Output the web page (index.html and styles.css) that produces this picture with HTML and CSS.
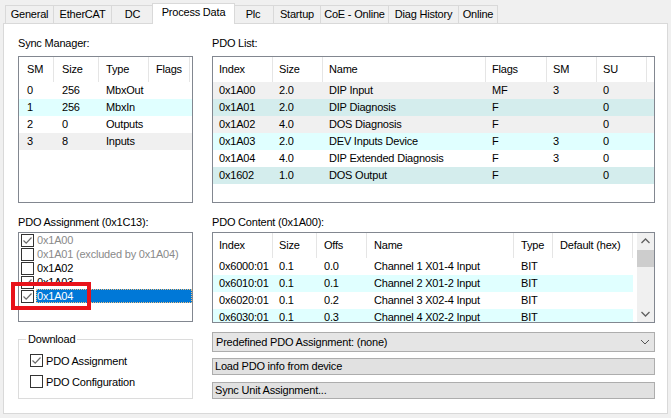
FILE: index.html
```html
<!DOCTYPE html>
<html>
<head>
<meta charset="utf-8">
<link rel="stylesheet" href="styles.css">
</head>
<body>
<div class="tabs">
  <div class="tab w-general">General</div>
  <div class="tab w-ethercat">EtherCAT</div>
  <div class="tab w-dc">DC</div>
  <div class="tab tab-sel w-pd">Process Data</div>
  <div class="tab w-plc">Plc</div>
  <div class="tab w-startup">Startup</div>
  <div class="tab w-coe">CoE - Online</div>
  <div class="tab w-diag">Diag History</div>
  <div class="tab w-online">Online</div>
</div>
<div class="panel">
  <div class="col">
    <div class="label first">Sync Manager:</div>
    <div class="lv box-top sm">
      <div class="lv-head"><span>SM</span><span>Size</span><span>Type</span><span>Flags</span></div>
      <div class="lv-row"><span>0</span><span>256</span><span>MbxOut</span><span></span></div>
      <div class="lv-row cyan"><span>1</span><span>256</span><span>MbxIn</span><span></span></div>
      <div class="lv-row"><span>2</span><span>0</span><span>Outputs</span><span></span></div>
      <div class="lv-row grey"><span>3</span><span>8</span><span>Inputs</span><span></span></div>
    </div>
    <div class="label second">PDO Assignment (0x1C13):</div>
    <div class="lb">
      <div class="lb-item dis"><span class="cb checked"><svg width="13" height="13" viewBox="0 0 13 13"><path d="M2.5 6.5 L5.2 9.2 L10.5 3.5" fill="none" stroke="#6a6a6a" stroke-width="1.2"/></svg></span><span class="lb-text">0x1A00</span></div>
      <div class="lb-item dis"><span class="cb"></span><span class="lb-text">0x1A01 (excluded by 0x1A04)</span></div>
      <div class="lb-item"><span class="cb"></span><span class="lb-text">0x1A02</span></div>
      <div class="lb-item"><span class="cb checked"><svg width="13" height="13" viewBox="0 0 13 13"><path d="M2.5 6.5 L5.2 9.2 L10.5 3.5" fill="none" stroke="#6a6a6a" stroke-width="1.2"/></svg></span><span class="lb-text">0x1A03</span></div>
      <div class="lb-item"><span class="cb checked"><svg width="13" height="13" viewBox="0 0 13 13"><path d="M2.5 6.5 L5.2 9.2 L10.5 3.5" fill="none" stroke="#6a6a6a" stroke-width="1.2"/></svg></span><span class="lb-text sel">0x1A04</span></div>
    </div>
    <div class="group">
      <span class="group-title">Download</span>
      <div class="chk"><span class="cb checked"><svg width="13" height="13" viewBox="0 0 13 13"><path d="M2.5 6.5 L5.2 9.2 L10.5 3.5" fill="none" stroke="#6a6a6a" stroke-width="1.2"/></svg></span><span>PDO Assignment</span></div>
      <div class="chk"><span class="cb"></span><span>PDO Configuration</span></div>
    </div>
  </div>
  <div class="col">
    <div class="label first">PDO List:</div>
    <div class="lv box-top pl">
      <div class="lv-head"><span>Index</span><span>Size</span><span>Name</span><span>Flags</span><span>SM</span><span>SU</span></div>
      <div class="lv-row grey"><span>0x1A00</span><span>2.0</span><span>DIP Input</span><span>MF</span><span>3</span><span>0</span></div>
      <div class="lv-row teal"><span>0x1A01</span><span>2.0</span><span>DIP Diagnosis</span><span>F</span><span></span><span>0</span></div>
      <div class="lv-row grey"><span>0x1A02</span><span>4.0</span><span>DOS Diagnosis</span><span>F</span><span></span><span>0</span></div>
      <div class="lv-row cyan"><span>0x1A03</span><span>2.0</span><span>DEV Inputs Device</span><span>F</span><span>3</span><span>0</span></div>
      <div class="lv-row"><span>0x1A04</span><span>4.0</span><span>DIP Extended Diagnosis</span><span>F</span><span>3</span><span>0</span></div>
      <div class="lv-row teal"><span>0x1602</span><span>1.0</span><span>DOS Output</span><span>F</span><span></span><span>0</span></div>
    </div>
    <div class="label second">PDO Content (0x1A00):</div>
    <div class="lv pc">
      <div class="pc-body">
        <div class="lv-head"><span>Index</span><span>Size</span><span>Offs</span><span>Name</span><span>Type</span><span>Default (hex)</span></div>
        <div class="lv-row"><span>0x6000:01</span><span>0.1</span><span>0.0</span><span>Channel 1 X01-4 Input</span><span>BIT</span><span></span></div>
        <div class="lv-row cyan"><span>0x6010:01</span><span>0.1</span><span>0.1</span><span>Channel 2 X01-2 Input</span><span>BIT</span><span></span></div>
        <div class="lv-row"><span>0x6020:01</span><span>0.1</span><span>0.2</span><span>Channel 3 X02-4 Input</span><span>BIT</span><span></span></div>
        <div class="lv-row cyan"><span>0x6030:01</span><span>0.1</span><span>0.3</span><span>Channel 4 X02-2 Input</span><span>BIT</span><span></span></div>
      </div>
      <div class="vscroll">
        <svg class="arr" width="17" height="17" viewBox="0 0 17 17"><path d="M4.5 10 L8.5 6 L12.5 10" fill="none" stroke="#606060" stroke-width="1.3"/></svg>
        <div class="thumb"></div>
        <div class="track"></div>
        <svg class="arr" width="17" height="17" viewBox="0 0 17 17"><path d="M4.5 7 L8.5 11 L12.5 7" fill="none" stroke="#606060" stroke-width="1.3"/></svg>
      </div>
    </div>
    <div class="combo"><span>Predefined PDO Assignment: (none)</span><svg width="10" height="6" viewBox="0 0 10 6"><path d="M1 1 L5 5 L9 1" fill="none" stroke="#555" stroke-width="1"/></svg></div>
    <div class="btn b1">Load PDO info from device</div>
    <div class="btn b2">Sync Unit Assignment...</div>
  </div>
  <div class="redbox"></div>
</div>
</body>
</html>
```
FILE: styles.css
```css
* { box-sizing: border-box; }
body {
  margin: 0;
  background: #f0f0f0;
  font-family: "Liberation Sans", Arial, sans-serif;
  font-size: 11px;
  letter-spacing: -0.2px;
  color: #000;
  width: 671px;
  height: 418px;
  overflow: hidden;
}
.tabs {
  display: flex;
  align-items: flex-end;
  height: 23px;
  padding-left: 5px;
  position: relative;
  z-index: 2;
}
.tab {
  height: 18px;
  line-height: 17px;
  text-align: center;
  border: 1px solid #d9d9d9;
  border-bottom: none;
  margin-left: -1px;
  background: #f0f0f0;
}
.tab:first-child { margin-left: 0; }
.tab-sel {
  height: 21px;
  margin-bottom: -1px;
  margin-left: -2px;
  margin-right: -2px;
  background: #fff;
  line-height: 17px;
  position: relative;
  z-index: 3;
}
.w-general { width: 49px; }
.w-ethercat { width: 59px; }
.w-dc { width: 43px; }
.w-pd { width: 83px; }
.w-plc { width: 42px; }
.w-startup { width: 48px; }
.w-coe { width: 69px; }
.w-diag { width: 71px; }
.w-online { width: 40px; }

.panel {
  position: relative;
  margin-left: 3px;
  width: 665px;
  height: 391px;
  border: 1px solid #d9d9d9;
  background: #fff;
  display: flex;
  gap: 19px;
  padding-left: 14px;
}
.col { display: flex; flex-direction: column; }
.col:first-child { width: 175px; }
.col:nth-child(2) { width: 443px; }
.label { height: 13px; line-height: 13px; white-space: nowrap; }
.label.first { margin-top: 13px; }
.label.second { margin-top: 13px; }
.box-top { margin-top: 6px; }

.lv {
  border: 1px solid #828790;
  background: #fff;
  overflow: hidden;
}
.sm, .pl { height: 147px; }
.lv-head { display: flex; height: 25px; }
.lv-head span {
  line-height: 25px;
  border-right: 1px solid #e5e5e5;
  padding-left: 6px;
  white-space: nowrap;
  flex: none;
}
.lv-row { display: flex; height: 17px; }
.lv-row span {
  line-height: 17px;
  padding-left: 6px;
  white-space: nowrap;
  overflow: hidden;
  flex: none;
}
.lv-row.grey { background: #f0f0f0; }
.lv-row.cyan { background: #e0ffff; }
.lv-row.teal { background: #d4eded; }

.sm .lv-head span:nth-child(1), .sm .lv-row span:nth-child(1) { width: 35px; padding-left: 8px; }
.sm .lv-head span:nth-child(2), .sm .lv-row span:nth-child(2) { width: 45px; padding-left: 8px; }
.sm .lv-head span:nth-child(3), .sm .lv-row span:nth-child(3) { width: 50px; padding-left: 7px; }
.sm .lv-head span:nth-child(4), .sm .lv-row span:nth-child(4) { width: 41px; padding-left: 7px; }

.pl .lv-head span:nth-child(1), .pl .lv-row span:nth-child(1) { width: 60px; }
.pl .lv-head span:nth-child(2), .pl .lv-row span:nth-child(2) { width: 50px; }
.pl .lv-head span:nth-child(3), .pl .lv-row span:nth-child(3) { width: 163px; }
.pl .lv-head span:nth-child(4), .pl .lv-row span:nth-child(4) { width: 61px; }
.pl .lv-head span:nth-child(5), .pl .lv-row span:nth-child(5) { width: 50px; }
.pl .lv-head span:nth-child(6), .pl .lv-row span:nth-child(6) { width: 50px; }

.pc {
  margin-top: 3px;
  height: 91px;
  display: flex;
  justify-content: space-between;
}
.pc-body { width: 420px; flex: none; }
.pc .lv-head span:nth-child(1), .pc .lv-row span:nth-child(1) { width: 60px; }
.pc .lv-head span:nth-child(2), .pc .lv-row span:nth-child(2) { width: 44px; }
.pc .lv-head span:nth-child(3), .pc .lv-row span:nth-child(3) { width: 50px; padding-left: 7px; }
.pc .lv-head span:nth-child(4), .pc .lv-row span:nth-child(4) { width: 147px; padding-left: 7px; }
.pc .lv-head span:nth-child(5), .pc .lv-row span:nth-child(5) { width: 39px; padding-left: 7px; }
.pc .lv-head span:nth-child(6), .pc .lv-row span:nth-child(6) { width: 80px; padding-left: 7px; }

.vscroll {
  width: 17px;
  flex: none;
  background: #f0f0f0;
  display: flex;
  flex-direction: column;
}
.vscroll .arr { display: block; flex: none; }
.thumb { height: 17px; background: #cdcdcd; flex: none; }
.track { flex: 1; }

.lb {
  margin-top: 3px;
  height: 90px;
  border: 1px solid #828790;
  background: #fff;
  padding-left: 2px;
}
.lb-item { display: flex; height: 14px; align-items: flex-start; }
.lb-item .cb { margin-top: 1px; }
.lb-text {
  margin-left: 2px;
  line-height: 14px;
  height: 14px;
  padding-left: 1px;
}
.lb-item.dis .lb-text { color: #8a8a8a; }
.lb-text.sel {
  flex: 1;
  background: #0078d7;
  color: #fff;
  outline: 1px dotted #f0c080;
  outline-offset: -1px;
  margin-right: 0;
}
.cb {
  width: 13px;
  height: 13px;
  border: 1px solid #333;
  background: #fff;
  flex: none;
  position: relative;
  display: block;
}
.cb svg { position: absolute; left: -1px; top: -1px; }

.group {
  position: relative;
  margin-top: 17px;
  height: 60px;
  border: 1px solid #dcdcdc;
  padding: 14px 0 0 11px;
  display: flex;
  flex-direction: column;
  gap: 8px;
}
.group-title {
  position: absolute;
  top: -7px;
  left: 7px;
  background: #fff;
  padding: 0 2px;
  line-height: 13px;
}
.chk { display: flex; align-items: center; height: 13px; gap: 3px; }

.combo {
  margin-top: 9px;
  height: 20px;
  border: 1px solid #adadad;
  background: #e5e5e5;
  display: flex;
  align-items: center;
  justify-content: space-between;
  padding: 0 4px 0 3px;
}
.btn {
  height: 17px;
  border: 1px solid #adadad;
  background: #e1e1e1;
  line-height: 15px;
  padding-left: 2px;
}
.b1 { margin-top: 6px; }
.b2 { margin-top: 7px; }

.redbox {
  position: absolute;
  left: 7px;
  top: 258px;
  width: 80px;
  height: 28px;
  border: 4px solid #e8121a;
}
```
